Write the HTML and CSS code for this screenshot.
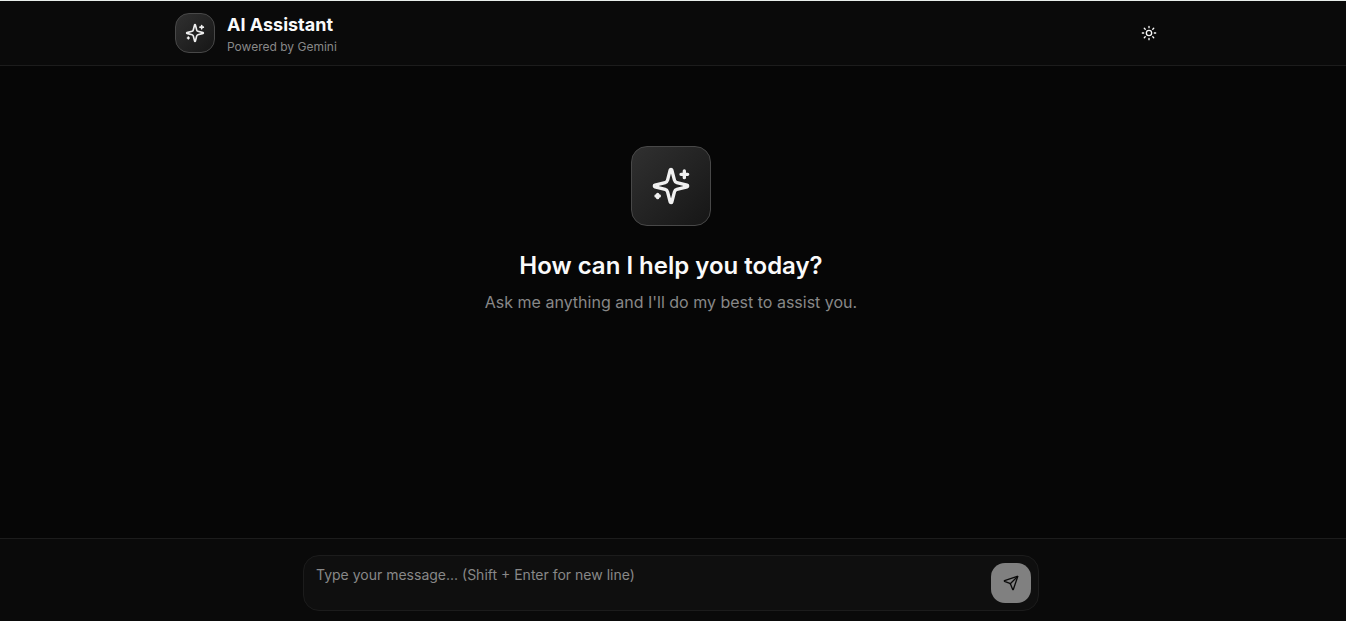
FILE: index.html
```html
<!DOCTYPE html>
<html lang="en">
<head>
<meta charset="utf-8">
<meta name="viewport" content="width=device-width, initial-scale=1">
<title>AI Assistant</title>
<link rel="stylesheet" href="styles.css">
</head>
<body>
<svg width="0" height="0" class="sprite" aria-hidden="true">
  <symbol id="sparkles" viewBox="0 0 24 24">
    <path d="M9.937 15.5A2 2 0 0 0 8.5 14.063l-6.135-1.582a.5.5 0 0 1 0-.962L8.5 9.936A2 2 0 0 0 9.937 8.5l1.582-6.135a.5.5 0 0 1 .963 0L14.063 8.5A2 2 0 0 0 15.5 9.937l6.135 1.581a.5.5 0 0 1 0 .964L15.5 14.063a2 2 0 0 0-1.437 1.437l-1.582 6.135a.5.5 0 0 1-.963 0z"/>
    <path d="M20 3v4M22 5h-4M4 17v2M5 18H3"/>
  </symbol>
</svg>
<div class="app">
  <header class="header">
    <div class="header-inner">
      <div class="brand">
        <div class="logo logo-small"><svg class="icon icon-20" aria-hidden="true"><use href="#sparkles"/></svg></div>
        <div>
          <h1 class="brand-name">AI Assistant</h1>
          <p class="brand-note">Powered by Gemini</p>
        </div>
      </div>
      <button class="theme-button" type="button" aria-label="Toggle theme">
        <svg class="icon icon-16" viewBox="0 0 24 24" aria-hidden="true"><circle cx="12" cy="12" r="4"/><path d="M12 2v2M12 20v2M4.93 4.93l1.41 1.41M17.66 17.66l1.41 1.41M2 12h2M20 12h2M6.34 17.66l-1.41 1.41M19.07 4.93l-1.41 1.41"/></svg>
      </button>
    </div>
  </header>
  <main class="welcome">
    <div class="logo logo-large"><svg class="icon icon-40" aria-hidden="true"><use href="#sparkles"/></svg></div>
    <h2 class="welcome-title">How can I help you today?</h2>
    <p class="welcome-text">Ask me anything and I'll do my best to assist you.</p>
  </main>
  <footer class="footer">
    <form class="composer">
      <textarea class="message" rows="1" aria-label="Message" placeholder="Type your message... (Shift + Enter for new line)"></textarea>
      <button class="send" type="button" aria-label="Send message">
        <svg class="icon icon-16" viewBox="0 0 24 24" aria-hidden="true"><path d="M14.536 21.686a.5.5 0 0 0 .937-.024l6.5-19a.496.496 0 0 0-.635-.635l-19 6.5a.5.5 0 0 0-.024.937l7.93 3.18a2 2 0 0 1 1.112 1.11z"/><path d="m21.854 2.147-10.94 10.939"/></svg>
      </button>
    </form>
  </footer>
</div>
</body>
</html>
```
FILE: styles.css
```css
* { box-sizing: border-box; }
body {
  margin: 0;
  background: #060606;
  color: #fafafa;
  font-family: Inter, "Liberation Sans", sans-serif;
}
h1, h2, p { margin: 0; }
.sprite { position: absolute; }
.app {
  display: flex;
  flex-direction: column;
  min-height: 100vh;
  border-top: 1px solid #e8eeeb;
}
.header {
  padding-right: 4px;
  background: #0a0a0a;
  border-bottom: 1px solid #1c1c1c;
}
.header-inner {
  display: flex;
  align-items: center;
  justify-content: space-between;
  max-width: 1024px;
  height: 64px;
  margin: 0 auto;
  padding: 0 16px;
}
.brand { display: flex; align-items: center; gap: 12px; }
.logo {
  display: grid;
  place-items: center;
  border: 1px solid #484848;
  background: linear-gradient(135deg, #303030, #161616);
  color: #f0f0f0;
}
.logo-small { width: 40px; height: 40px; border-radius: 14px; }
.logo-large { width: 80px; height: 80px; border-radius: 16px; }
.icon {
  display: block;
  fill: none;
  stroke: currentColor;
  stroke-width: 2;
  stroke-linecap: round;
  stroke-linejoin: round;
}
.icon-16 { width: 16px; height: 16px; }
.icon-20 { width: 20px; height: 20px; }
.icon-40 { width: 40px; height: 40px; }
.brand-name { font-size: 18px; line-height: 28px; font-weight: 700; }
.brand-note { font-size: 12px; line-height: 16px; color: #888888; }
.theme-button {
  display: grid;
  place-items: center;
  width: 36px;
  height: 36px;
  padding: 0;
  border: 0;
  border-radius: 10px;
  background: transparent;
  color: #fafafa;
}
.welcome {
  display: flex;
  flex: 1;
  flex-direction: column;
  align-items: center;
  padding: 80px 20px 32px 16px;
  text-align: center;
}
.welcome-title {
  margin-top: 24px;
  font-size: 24px;
  line-height: 32px;
  font-weight: 600;
}
.welcome-text {
  margin-top: 8px;
  font-size: 16px;
  line-height: 24px;
  color: #888888;
}
.footer {
  padding: 16px 20px 10px 16px;
  background: #0a0a0a;
  border-top: 1px solid #1c1c1c;
}
.composer {
  display: flex;
  align-items: center;
  gap: 8px;
  max-width: 736px;
  height: 56px;
  margin: 0 auto;
  padding: 0 7px 0 4px;
  border: 1px solid #1c1c1c;
  border-radius: 16px;
  background: #0f0f0f;
}
.message {
  flex: 1;
  min-width: 0;
  height: 40px;
  padding: 2px 8px;
  border: 0;
  outline: 0;
  resize: none;
  background: transparent;
  color: #fafafa;
  font: 400 14px/20px Inter, "Liberation Sans", sans-serif;
}
.message::placeholder { color: #888888; opacity: 1; }
.send {
  display: grid;
  place-items: center;
  width: 40px;
  height: 40px;
  padding: 0;
  border: 0;
  border-radius: 14px;
  background: #808080;
  color: #0a0a0a;
}
```
